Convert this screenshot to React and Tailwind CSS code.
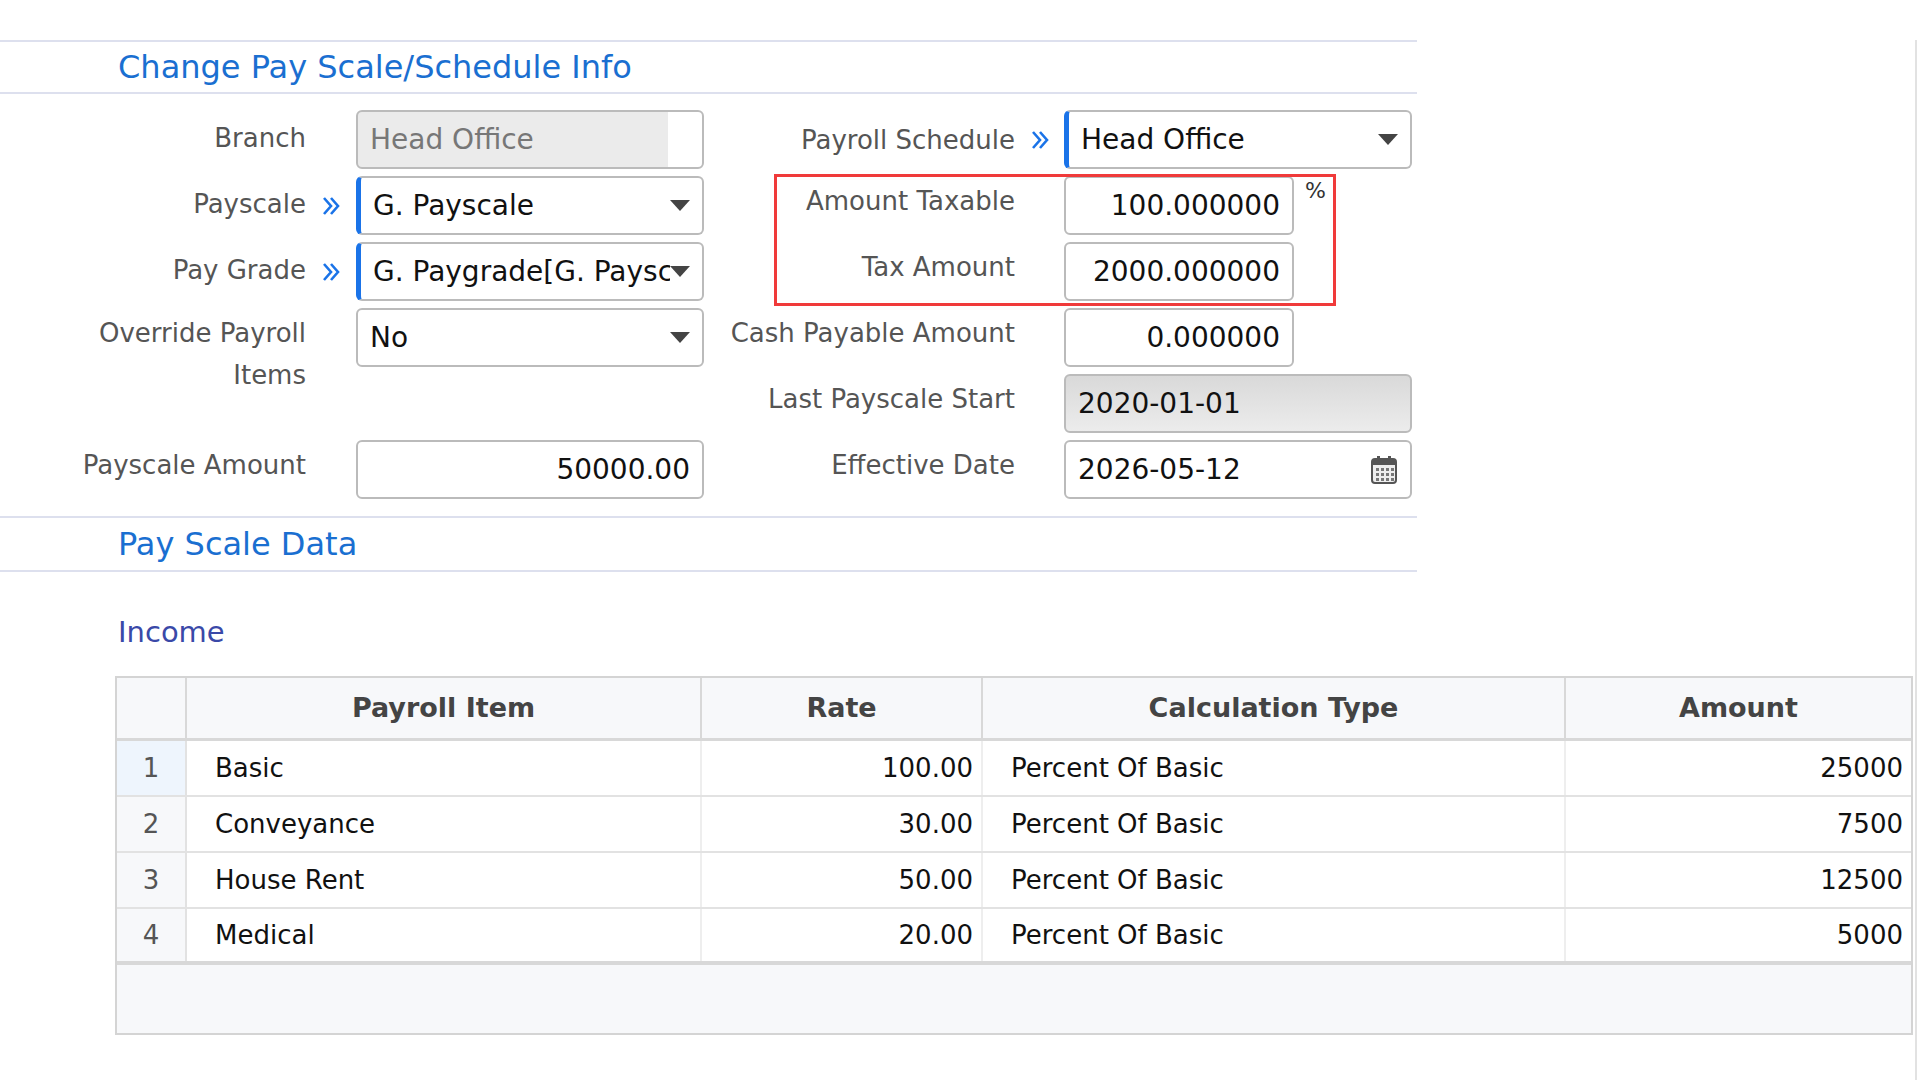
import React from "react";

const font = { fontFamily: '"DejaVu Sans", "Open Sans", sans-serif' };

function Chev() {
  return (
    <svg width="20" height="22" viewBox="0 0 20 22" fill="none" stroke="#1a73e8" strokeWidth="2.6">
      <path d="M3 3l7 8-7 8M10 3l7 8-7 8" />
    </svg>
  );
}

function Caret() {
  return <div className="w-0 h-0 border-l-[10px] border-r-[10px] border-t-[11px] border-l-transparent border-r-transparent border-t-[#444]" />;
}

function Cal() {
  return (
    <svg width="28" height="30" viewBox="0 0 28 30">
      <rect x="2" y="4" width="24" height="24" rx="3" fill="#eee" stroke="#555" strokeWidth="2" />
      <rect x="2" y="4" width="24" height="6" fill="#555" />
      <rect x="7" y="1" width="3" height="6" fill="#555" />
      <rect x="18" y="1" width="3" height="6" fill="#555" />
      {[13, 18, 23].map((y) =>
        [6, 11, 16, 21].map((x) => <rect key={x + "-" + y} x={x} y={y} width="3" height="3" fill="#777" />)
      )}
    </svg>
  );
}

function Input({ children, w = "w-[348px]", right, grey, blue, caret, cal, faded, strip }) {
  return (
    <div
      className={`${w} h-[59px] rounded-[6px] border-2 border-[#bbb] flex items-center px-3 text-[28px] text-[#111] shrink-0 overflow-hidden ${
        right ? "justify-end" : "justify-between"
      } ${grey ? "bg-gradient-to-b from-[#d9d9d9] to-[#ececec]" : "bg-white"} ${blue ? "border-l-[5px] border-l-[#1a73e8]" : ""} ${
        strip ? "bg-[linear-gradient(to_right,#ebebeb_0,#ebebeb_310px,#fff_310px)]" : ""
      }`}
    >
      <span className={`whitespace-nowrap overflow-hidden ${faded ? "text-[#777]" : ""}`}>{children}</span>
      {caret && <Caret />}
      {cal && <Cal />}
    </div>
  );
}

function Label({ children, w }) {
  return <div className={`${w} text-right text-[26px] text-[#555] shrink-0 leading-[42px]`}>{children}</div>;
}

function Row({ left, right }) {
  return (
    <div className="flex h-[59px] items-start">
      <div className="flex items-start w-[704px]">{left}</div>
      <div className="flex items-start">{right}</div>
    </div>
  );
}

const Slot = ({ chev }) => <div className="w-[50px] h-[59px] flex items-center justify-center shrink-0">{chev && <Chev />}</div>;
const RSlot = ({ chev }) => <div className="w-[49px] h-[59px] flex items-center justify-center shrink-0">{chev && <Chev />}</div>;

const rows = [
  ["1", "Basic", "100.00", "25000"],
  ["2", "Conveyance", "30.00", "7500"],
  ["3", "House Rent", "50.00", "12500"],
  ["4", "Medical", "20.00", "5000"],
];

export default function App() {
  return (
    <div className="relative w-[1920px] h-[1080px] bg-white overflow-hidden pt-[40px]" style={font}>
      <div className="absolute right-[3px] top-[40px] bottom-0 w-[2px] bg-[#e2e2e2]" />
      <div className="w-[1417px] border-t-2 border-b-2 border-[#dde0ee] h-[54px] flex items-center pl-[118px] text-[32px] text-[#1a6fd1]">
        Change Pay Scale/Schedule Info
      </div>
      <div className="relative flex flex-col gap-[7px] pt-[16px]">
        <div className="absolute left-[774px] top-[80px] w-[562px] h-[132px] border-[3px] border-[#f03a3a]" />
        <Row
          left={<><Label w="w-[306px] pt-[7px]">Branch</Label><Slot /><Input strip faded>Head Office</Input></>}
          right={<><Label w="w-[311px] pt-[9px]">Payroll Schedule</Label><RSlot chev /><Input blue caret>Head Office</Input></>}
        />
        <Row
          left={<><Label w="w-[306px] pt-[7px]">Payscale</Label><Slot chev /><Input blue caret>G. Payscale</Input></>}
          right={<><Label w="w-[311px] pt-[4px]">Amount Taxable</Label><RSlot /><Input w="w-[230px]" right>100.000000</Input><span className="ml-[11px] text-[22px] text-[#333] -mt-[2px]">%</span></>}
        />
        <Row
          left={<><Label w="w-[306px] pt-[7px]">Pay Grade</Label><Slot chev /><Input blue caret>G. Paygrade[G. Paysc</Input></>}
          right={<><Label w="w-[311px] pt-[4px]">Tax Amount</Label><RSlot /><Input w="w-[230px]" right>2000.000000</Input></>}
        />
        <Row
          left={<><Label w="w-[306px] pt-[4px]">Override Payroll<br />Items</Label><Slot /><Input caret>No</Input></>}
          right={<><Label w="w-[311px] pt-[4px]">Cash Payable Amount</Label><RSlot /><Input w="w-[230px]" right>0.000000</Input></>}
        />
        <Row
          left={null}
          right={<><Label w="w-[311px] pt-[4px]">Last Payscale Start</Label><RSlot /><Input grey>2020-01-01</Input></>}
        />
        <Row
          left={<><Label w="w-[306px] pt-[4px]">Payscale Amount</Label><Slot /><Input right>50000.00</Input></>}
          right={<><Label w="w-[311px] pt-[4px]">Effective Date</Label><RSlot /><Input cal>2026-05-12</Input></>}
        />
      </div>
      <div className="mt-[17px] w-[1417px] border-t-2 border-b-2 border-[#dde0ee] h-[56px] flex items-center pl-[118px] text-[32px] text-[#1a6fd1]">
        Pay Scale Data
      </div>
      <div className="pl-[118px] mt-[42px] text-[29px] text-[#3a49a8] leading-[36px]">Income</div>
      <div className="ml-[115px] mt-[26px] w-[1798px] border-2 border-[#d4d4d4] bg-[#f7f8fa] h-[359px] text-[26px]">
        <div className="grid grid-cols-[70px_515px_281px_583px_345px] h-[63px] border-b-[3px] border-[#d8d8d8] font-bold text-[#444] text-[27px]">
          <div className="border-r-2 border-[#d8d8d8]" />
          <div className="border-r-2 border-[#d8d8d8] flex items-center justify-center">Payroll Item</div>
          <div className="border-r-2 border-[#d8d8d8] flex items-center justify-center">Rate</div>
          <div className="border-r-2 border-[#d8d8d8] flex items-center justify-center">Calculation Type</div>
          <div className="flex items-center justify-center">Amount</div>
        </div>
        {rows.map((r, i) => (
          <div key={r[0]} className={`grid grid-cols-[70px_515px_281px_583px_345px] h-[56px] bg-white text-[#111] ${i === 3 ? "border-b-[4px] border-[#d8d8d8]" : "border-b-2 border-[#e2e2e2]"}`}>
            <div className={`border-r-2 border-[#e2e2e2] flex items-center justify-center text-[#555] ${i === 0 ? "bg-[#eef5fd]" : "bg-[#f7f8fa]"}`}>{r[0]}</div>
            <div className="border-r-2 border-[#eee] flex items-center pl-[28px]">{r[1]}</div>
            <div className="border-r-2 border-[#eee] flex items-center justify-end pr-[8px]">{r[2]}</div>
            <div className="border-r-2 border-[#eee] flex items-center pl-[28px]">Percent Of Basic</div>
            <div className="flex items-center justify-end pr-[8px]">{r[3]}</div>
          </div>
        ))}
      </div>
    </div>
  );
}
